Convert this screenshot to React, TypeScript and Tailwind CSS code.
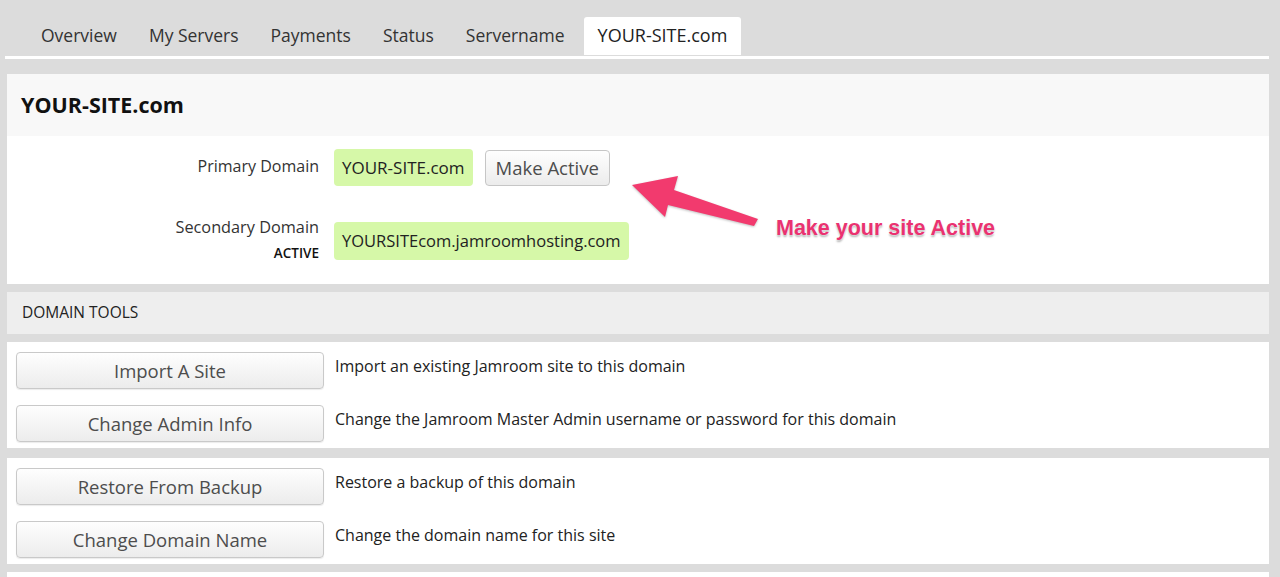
import React from 'react';

const tabs = ['Overview', 'My Servers', 'Payments', 'Status', 'Servername', 'YOUR-SITE.com'];

const tools = [
    [
        { label: 'Import A Site', desc: 'Import an existing Jamroom site to this domain' },
        { label: 'Change Admin Info', desc: 'Change the Jamroom Master Admin username or password for this domain' },
    ],
    [
        { label: 'Restore From Backup', desc: 'Restore a backup of this domain' },
        { label: 'Change Domain Name', desc: 'Change the domain name for this site' },
    ],
];

const ToolButton: React.FC<{ label: string }> = ({ label }) => (
    <button className="w-[308px] h-[37px] shrink-0 rounded-[4px] border border-[#c9c9c9] bg-gradient-to-b from-[#fefefe] to-[#ececec] text-[18.5px] text-[#4d4d4d] shadow-[0_1px_1px_rgba(0,0,0,0.08)]">
        {label}
    </button>
);

const App: React.FC = () => {
    return (
        <div className="w-full h-[577px] overflow-hidden bg-[#dcdcdc] pl-[7px] pr-[11px] font-['Open_Sans',sans-serif] text-[#222]">
            {/* Tabs */}
            <div className="flex gap-[6px] pl-[21px] pt-[17px] h-[55px]">
                {tabs.map((t, i) => (
                    <div
                        key={t}
                        className={`h-[38px] flex items-center text-[17.5px] rounded-t-[3px] pb-[1px] ${
                            i === tabs.length - 1 ? 'bg-white text-[#222] px-[14px] text-[18px]' : 'text-[#333] px-[13px]'
                        }`}
                    >
                        {t}
                    </div>
                ))}
            </div>
            <div className="h-[3px] bg-white mt-[1px] -ml-[2px]" />

            {/* Site panel */}
            <div className="mt-[15px] relative">
                <div className="h-[62px] bg-[#f8f8f8] flex items-center px-[14px] text-[21.5px] font-bold text-[#111]">
                    YOUR-SITE.com
                </div>
                <div className="bg-white h-[148px] pt-[13px]">
                    <div className="flex items-center">
                        <div className="w-[312px] text-right text-[16px] text-[#333] -mt-[3px]">Primary Domain</div>
                        <div className="ml-[15px] h-[37px] px-[8px] flex items-center rounded-[4px] bg-[#d6f8a8] text-[17px] text-[#222]">
                            YOUR-SITE.com
                        </div>
                        <button className="ml-[12px] h-[36px] px-[10px] rounded-[4px] border border-[#c6c6c6] bg-gradient-to-b from-[#fefefe] to-[#ececec] text-[18.5px] text-[#4d4d4d]">
                            Make Active
                        </button>
                    </div>
                    <div className="flex items-start mt-[36px]">
                        <div className="w-[312px] text-right text-[16.3px] text-[#333] leading-[20px] -mt-[5px]">
                            <div>Secondary Domain</div>
                            <div className="text-[13.5px] font-semibold text-[#111] mt-[6px]">ACTIVE</div>
                        </div>
                        <div className="ml-[15px] h-[38px] px-[8px] flex items-center rounded-[4px] bg-[#d6f8a8] text-[16.5px] text-[#222]">
                            YOURSITEcom.jamroomhosting.com
                        </div>
                    </div>
                </div>

                {/* Annotation */}
                <svg className="absolute left-[610px] top-[95px] w-[150px] h-[60px] drop-shadow-[0_1px_1px_rgba(0,0,0,0.25)]" viewBox="610 165 150 60">
                    <polygon
                        points="625,181 671,172 667,186 751,215 747,222 661,201 658,213"
                        fill="#f23a6e"
                    />
                </svg>
                <div className="absolute left-[769px] top-[138px] text-[21.5px] font-bold text-[#ea3270] font-['Liberation_Sans',Arial,sans-serif] [text-shadow:0_0_2px_#fff,0_2px_2px_rgba(0,0,0,0.3)]">
                    Make your site Active
                </div>
            </div>

            {/* Domain tools header */}
            <div className="mt-[8px] h-[42px] bg-[#eeeeee] flex items-center px-[15px] text-[15.5px] text-[#222]">
                DOMAIN TOOLS
            </div>

            {tools.map((group, gi) => (
                <div key={gi} className={`bg-white pl-[9px] pt-[10px] pb-[6px] flex flex-col gap-[16px] ${gi === 0 ? 'mt-[8px]' : 'mt-[10px]'}`}>
                    {group.map((row) => (
                        <div key={row.label} className="flex items-start">
                            <ToolButton label={row.label} />
                            <div className="ml-[11px] pt-[2px] text-[16px] text-[#222]">{row.desc}</div>
                        </div>
                    ))}
                </div>
            ))}

            <div className="mt-[8px] h-[40px] bg-white" />
        </div>
    );
};

export default App;
